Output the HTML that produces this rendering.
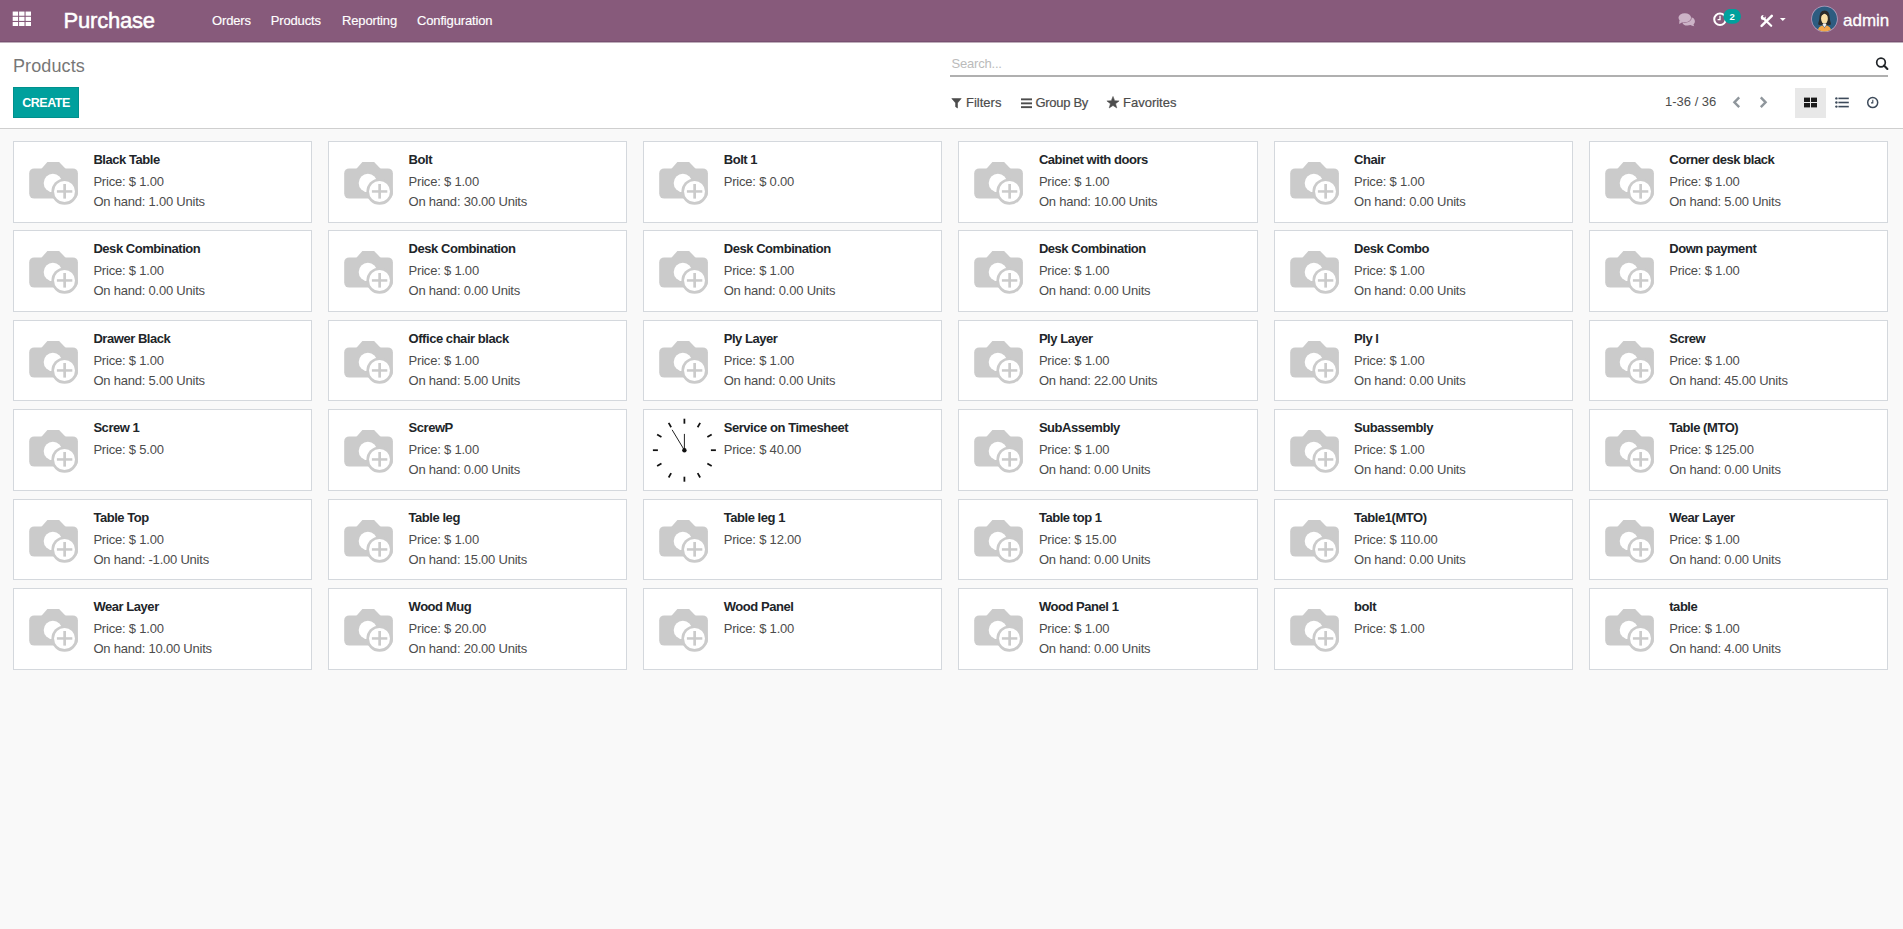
<!DOCTYPE html>
<html><head><meta charset="utf-8"><title>Products - Purchase</title>
<style>
*{box-sizing:border-box}
html,body{margin:0;padding:0;width:1903px;height:929px;overflow:hidden;background:#f9f9f9;font-family:"Liberation Sans",sans-serif;}
.nav{position:absolute;left:0;top:0;width:1903px;height:41px;background:#875A7B;}
.abs{position:absolute;white-space:nowrap;}
.brand{left:63.5px;top:6.5px;font-size:22px;line-height:28px;color:#fff;letter-spacing:-0.2px;-webkit-text-stroke:0.5px #fff;}
.menu{top:11px;font-size:13px;line-height:20px;color:#fff;letter-spacing:-0.15px;-webkit-text-stroke:0.15px #fff;}
.cp{position:absolute;left:0;top:43px;width:1903px;height:86px;background:#fff;border-bottom:1px solid #cfcfcf;}
.bc{left:13px;top:54.2px;letter-spacing:0.1px;font-size:18px;line-height:24px;color:#777;}
.btn{left:13px;top:87px;width:66px;height:31px;background:#00A09D;border:1px solid #00908d;color:#fff;font-weight:bold;font-size:12.5px;letter-spacing:-0.5px;line-height:30.5px;text-align:center;}
.search{left:950px;top:54px;width:938px;height:23px;border-bottom:2px solid #b0b0b0;}
.sph{left:951.5px;top:56px;letter-spacing:-0.2px;font-size:13px;line-height:16px;color:#bbb;}
.fb{top:95.3px;font-size:13px;line-height:16px;color:#4c4c4c;-webkit-text-stroke:0.2px #4c4c4c;}
.pager{left:1665px;top:93.9px;font-size:13px;line-height:16px;color:#4c4c4c;}
.grid{position:absolute;left:13px;top:141px;width:1875px;display:grid;grid-template-columns:repeat(6,1fr);column-gap:16px;row-gap:7.7px;}
.rec{position:relative;height:81.7px;background:#fff;border:1px solid #d4d8dd;}
.rec .cam{position:absolute;left:11px;top:16px;}
.rec .clk{position:absolute;left:-1px;top:-1px;}
.t{position:absolute;left:79.4px;font-size:13px;line-height:20px;white-space:nowrap;}
.n{top:8px;font-weight:bold;color:#212529;letter-spacing:-0.45px;}
.p{top:30px;color:#4c4c4c;letter-spacing:-0.2px;}
.o{top:50px;color:#4c4c4c;letter-spacing:-0.22px;}
</style></head><body>
<div class="nav"></div>
<div class="abs" style="left:0;top:41px;width:1903px;height:1px;background:#775070"></div>
<div class="abs" style="left:0;top:42px;width:1903px;height:1px;background:#bfaebb"></div>
<svg class="abs" style="left:12px;top:11px" width="20" height="16" viewBox="0 0 20 16">
<g fill="#fff">
<rect x="0.7" y="0.55" width="5.4" height="4.2"/><rect x="7.1" y="0.55" width="5.4" height="4.2"/><rect x="13.6" y="0.55" width="5.4" height="4.2"/>
<rect x="0.7" y="5.8" width="5.4" height="4.1"/><rect x="7.1" y="5.8" width="5.4" height="4.1"/><rect x="13.6" y="5.8" width="5.4" height="4.1"/>
<rect x="0.7" y="11" width="5.4" height="4"/><rect x="7.1" y="11" width="5.4" height="4"/><rect x="13.6" y="11" width="5.4" height="4"/>
</g></svg>
<div class="abs brand">Purchase</div>
<div class="abs menu" style="left:212px">Orders</div>
<div class="abs menu" style="left:270.7px">Products</div>
<div class="abs menu" style="left:342px">Reporting</div>
<div class="abs menu" style="left:417px">Configuration</div>
<!-- chat icon -->
<svg class="abs" style="left:1676px;top:11px" width="22" height="18" viewBox="0 0 22 18">
<g fill="#ccb3c7">
<path d="M9.5 5.6 C14.6 5.2 18.9 6.8 18.9 10.3 C18.9 12 18 13.1 17.4 13.7 L18.3 15.3 C16.7 15.1 15.5 14.7 14.4 14.1 C13.5 14.4 12.5 14.6 11.5 14.6 C8.5 14.6 6.6 13.2 6.2 11.2 Z"/>
</g>
<ellipse cx="8.8" cy="6.7" rx="6.9" ry="5" fill="#875A7B"/>
<g fill="#ccb3c7">
<ellipse cx="8.8" cy="6.7" rx="6.3" ry="4.5"/>
<path d="M3.4 9.2 L3.2 12.9 L7.2 10.8 Z"/>
</g></svg>
<!-- activity clock -->
<svg class="abs" style="left:1710px;top:9px" width="34" height="20" viewBox="0 0 34 20">
<circle cx="10" cy="10.3" r="5.8" fill="none" stroke="#fff" stroke-width="2"/>
<path d="M10 6.8 V10.6 H7.6" fill="none" stroke="#fff" stroke-width="1.3"/>
<rect x="13.4" y="-0.2" width="17.6" height="15" rx="7.5" fill="#00A09D"/>
<text x="22.2" y="11" font-family="Liberation Sans" font-size="9.5" font-weight="bold" fill="#fff" text-anchor="middle">2</text>
</svg>
<!-- tools -->
<svg class="abs" style="left:1759px;top:13px" width="30" height="16" viewBox="0 0 30 16">
<g stroke="#fff" stroke-linecap="round" fill="none">
<path d="M5.4 6.2 L12.2 12.8" stroke-width="2.2"/>
<path d="M2.6 12.8 L12.8 2.9" stroke-width="2.5"/>
</g>
<circle cx="4.3" cy="4.4" r="2.5" fill="#fff"/>
<circle cx="5.3" cy="3.2" r="1.2" fill="#875A7B"/>
<path d="M20.9 5 L26.7 5 L23.8 8 Z" fill="#fff"/>
</svg>
<!-- avatar -->
<svg class="abs" style="left:1810px;top:5px" width="29" height="29" viewBox="0 0 29 29">
<defs><clipPath id="av"><circle cx="14.5" cy="13.9" r="12.5"/></clipPath></defs>
<circle cx="14.5" cy="13.9" r="13.2" fill="#bba6c4"/>
<circle cx="14.5" cy="13.9" r="12.5" fill="#2d5c80"/>
<g clip-path="url(#av)">
<path d="M8.6 19.8 C7.6 18.6 9.2 16.6 9.4 13 C9.6 8.2 11 5.4 14.6 5.4 C18.2 5.4 19.6 8.4 19.8 13 C20 16.6 21.6 18.6 20.6 19.8 C18 20.6 11 20.6 8.6 19.8 Z" fill="#2b2b2b"/>
<ellipse cx="14.45" cy="13.6" rx="3.4" ry="5" fill="#f9dfa6"/>
<path d="M10.8 10.4 C11.2 7.2 13.6 6.6 15.4 6.8 C17.4 7.2 18.4 8.6 18.4 10.6 C16.8 9.6 15.4 9.2 14.4 8.4 C13.4 9.4 12 10 10.8 10.4 Z" fill="#2b2b2b"/>
<path d="M7.2 29 C7.4 23 9.8 21.4 12.4 20.6 L14.5 22.4 L16.6 20.6 C19.2 21.4 21.6 23 21.8 29 Z" fill="#f4a64a"/>
<path d="M12.6 19.8 L14.5 22.2 L16.4 19.8 L16 18.6 H13 Z" fill="#f1f1f1"/>
<path d="M14 22 L14.5 23.6 L15 22 Z" fill="#7d6f8a"/>
</g>
</svg>
<div class="abs" style="left:1843px;top:8.7px;font-size:17px;line-height:24px;color:#fff;-webkit-text-stroke:0.3px #fff">admin</div>

<div class="cp"></div>
<div class="abs bc">Products</div>
<div class="abs btn">CREATE</div>
<div class="abs search"></div>
<div class="abs sph">Search...</div>
<svg class="abs" style="left:1872px;top:54px" width="20" height="20" viewBox="0 0 20 20">
<circle cx="9" cy="8.5" r="4.3" fill="none" stroke="#212529" stroke-width="1.7"/>
<path d="M12 11.6 L15.4 15" stroke="#212529" stroke-width="2.1" stroke-linecap="round"/>
</svg>
<!-- funnel -->
<svg class="abs" style="left:950px;top:96px" width="14" height="14" viewBox="0 0 14 14">
<path d="M1.8 2.6 H11.2 L7.5 6.9 V12 L5.6 10.8 V6.9 Z" fill="#4c4c4c" stroke="#4c4c4c" stroke-width="0.6" stroke-linejoin="round"/>
</svg>
<div class="abs fb" style="left:966px">Filters</div>
<!-- bars -->
<svg class="abs" style="left:1020px;top:96px" width="14" height="14" viewBox="0 0 14 14">
<g fill="#4c4c4c"><rect x="1" y="2.4" width="11" height="1.9"/><rect x="1" y="6.4" width="11" height="1.9"/><rect x="1" y="10.2" width="11" height="1.9"/></g>
</svg>
<div class="abs fb" style="left:1035.5px;letter-spacing:-0.3px">Group By</div>
<!-- star -->
<svg class="abs" style="left:1105px;top:95px" width="16" height="15" viewBox="0 0 16 15">
<path d="M8 1.4 L9.7 5.7 L14.1 5.9 L10.6 8.7 L11.8 13 L8 10.5 L4.2 13 L5.4 8.7 L1.9 5.9 L6.3 5.7 Z" fill="#4c4c4c" stroke="#4c4c4c" stroke-width="0.5" stroke-linejoin="round"/>
</svg>
<div class="abs fb" style="left:1123px">Favorites</div>
<div class="abs pager">1-36 / 36</div>
<svg class="abs" style="left:1729px;top:94px" width="44" height="16" viewBox="0 0 44 16">
<g fill="none" stroke="#8f969c" stroke-width="2.4" stroke-linejoin="miter">
<path d="M10.2 3.4 L5.4 8.3 L10.2 13.2"/>
<path d="M31.8 3.4 L36.6 8.3 L31.8 13.2"/>
</g></svg>
<div class="abs" style="left:1795px;top:88px;width:31px;height:30px;background:#e8e8e8"></div>
<svg class="abs" style="left:1802px;top:95px" width="18" height="15" viewBox="0 0 18 15">
<g fill="#1a1a1a"><rect x="2" y="2.6" width="6" height="4.4"/><rect x="9" y="2.6" width="6" height="4.4"/><rect x="2" y="8" width="6" height="4.4"/><rect x="9" y="8" width="6" height="4.4"/></g>
</svg>
<svg class="abs" style="left:1833px;top:95px" width="18" height="15" viewBox="0 0 18 15">
<g fill="#3d4a5a"><circle cx="3.4" cy="3.4" r="1.2"/><circle cx="3.4" cy="7.5" r="1.2"/><circle cx="3.4" cy="11.6" r="1.2"/>
<rect x="5.4" y="2.6" width="10.4" height="1.6"/><rect x="5.4" y="6.7" width="10.4" height="1.6"/><rect x="5.4" y="10.8" width="10.4" height="1.6"/></g>
</svg>
<svg class="abs" style="left:1864px;top:94px" width="18" height="18" viewBox="0 0 18 18">
<circle cx="8.7" cy="8.6" r="5" fill="none" stroke="#3d4a5a" stroke-width="1.5"/>
<path d="M8.8 5.8 V8.9 H7" fill="none" stroke="#3d4a5a" stroke-width="1.1"/>
</svg>

<div class="grid">
<div class="rec"><svg class="cam" width="60" height="52" viewBox="0 0 60 52"><path d="M15.8 11.4 L22.4 3.9 L34.1 3.9 L41.3 11.4 Z" fill="#cbcbcb"/><rect x="4.2" y="10.4" width="48.7" height="30.2" rx="5" fill="#cbcbcb"/><circle cx="27.9" cy="24.9" r="9.2" fill="#fff"/><circle cx="39.6" cy="33.6" r="13.2" fill="#cbcbcb"/><circle cx="39.5" cy="33.5" r="10.5" fill="#fff"/><rect x="31.9" y="32.2" width="15.4" height="2.5" fill="#cbcbcb"/><rect x="38.3" y="26" width="2.7" height="14.6" fill="#cbcbcb"/></svg><div class="t n">Black Table</div><div class="t p">Price: $ 1.00</div><div class="t o">On hand: 1.00 Units</div></div>
<div class="rec"><svg class="cam" width="60" height="52" viewBox="0 0 60 52"><path d="M15.8 11.4 L22.4 3.9 L34.1 3.9 L41.3 11.4 Z" fill="#cbcbcb"/><rect x="4.2" y="10.4" width="48.7" height="30.2" rx="5" fill="#cbcbcb"/><circle cx="27.9" cy="24.9" r="9.2" fill="#fff"/><circle cx="39.6" cy="33.6" r="13.2" fill="#cbcbcb"/><circle cx="39.5" cy="33.5" r="10.5" fill="#fff"/><rect x="31.9" y="32.2" width="15.4" height="2.5" fill="#cbcbcb"/><rect x="38.3" y="26" width="2.7" height="14.6" fill="#cbcbcb"/></svg><div class="t n">Bolt</div><div class="t p">Price: $ 1.00</div><div class="t o">On hand: 30.00 Units</div></div>
<div class="rec"><svg class="cam" width="60" height="52" viewBox="0 0 60 52"><path d="M15.8 11.4 L22.4 3.9 L34.1 3.9 L41.3 11.4 Z" fill="#cbcbcb"/><rect x="4.2" y="10.4" width="48.7" height="30.2" rx="5" fill="#cbcbcb"/><circle cx="27.9" cy="24.9" r="9.2" fill="#fff"/><circle cx="39.6" cy="33.6" r="13.2" fill="#cbcbcb"/><circle cx="39.5" cy="33.5" r="10.5" fill="#fff"/><rect x="31.9" y="32.2" width="15.4" height="2.5" fill="#cbcbcb"/><rect x="38.3" y="26" width="2.7" height="14.6" fill="#cbcbcb"/></svg><div class="t n">Bolt 1</div><div class="t p">Price: $ 0.00</div></div>
<div class="rec"><svg class="cam" width="60" height="52" viewBox="0 0 60 52"><path d="M15.8 11.4 L22.4 3.9 L34.1 3.9 L41.3 11.4 Z" fill="#cbcbcb"/><rect x="4.2" y="10.4" width="48.7" height="30.2" rx="5" fill="#cbcbcb"/><circle cx="27.9" cy="24.9" r="9.2" fill="#fff"/><circle cx="39.6" cy="33.6" r="13.2" fill="#cbcbcb"/><circle cx="39.5" cy="33.5" r="10.5" fill="#fff"/><rect x="31.9" y="32.2" width="15.4" height="2.5" fill="#cbcbcb"/><rect x="38.3" y="26" width="2.7" height="14.6" fill="#cbcbcb"/></svg><div class="t n">Cabinet with doors</div><div class="t p">Price: $ 1.00</div><div class="t o">On hand: 10.00 Units</div></div>
<div class="rec"><svg class="cam" width="60" height="52" viewBox="0 0 60 52"><path d="M15.8 11.4 L22.4 3.9 L34.1 3.9 L41.3 11.4 Z" fill="#cbcbcb"/><rect x="4.2" y="10.4" width="48.7" height="30.2" rx="5" fill="#cbcbcb"/><circle cx="27.9" cy="24.9" r="9.2" fill="#fff"/><circle cx="39.6" cy="33.6" r="13.2" fill="#cbcbcb"/><circle cx="39.5" cy="33.5" r="10.5" fill="#fff"/><rect x="31.9" y="32.2" width="15.4" height="2.5" fill="#cbcbcb"/><rect x="38.3" y="26" width="2.7" height="14.6" fill="#cbcbcb"/></svg><div class="t n">Chair</div><div class="t p">Price: $ 1.00</div><div class="t o">On hand: 0.00 Units</div></div>
<div class="rec"><svg class="cam" width="60" height="52" viewBox="0 0 60 52"><path d="M15.8 11.4 L22.4 3.9 L34.1 3.9 L41.3 11.4 Z" fill="#cbcbcb"/><rect x="4.2" y="10.4" width="48.7" height="30.2" rx="5" fill="#cbcbcb"/><circle cx="27.9" cy="24.9" r="9.2" fill="#fff"/><circle cx="39.6" cy="33.6" r="13.2" fill="#cbcbcb"/><circle cx="39.5" cy="33.5" r="10.5" fill="#fff"/><rect x="31.9" y="32.2" width="15.4" height="2.5" fill="#cbcbcb"/><rect x="38.3" y="26" width="2.7" height="14.6" fill="#cbcbcb"/></svg><div class="t n">Corner desk black</div><div class="t p">Price: $ 1.00</div><div class="t o">On hand: 5.00 Units</div></div>
<div class="rec"><svg class="cam" width="60" height="52" viewBox="0 0 60 52"><path d="M15.8 11.4 L22.4 3.9 L34.1 3.9 L41.3 11.4 Z" fill="#cbcbcb"/><rect x="4.2" y="10.4" width="48.7" height="30.2" rx="5" fill="#cbcbcb"/><circle cx="27.9" cy="24.9" r="9.2" fill="#fff"/><circle cx="39.6" cy="33.6" r="13.2" fill="#cbcbcb"/><circle cx="39.5" cy="33.5" r="10.5" fill="#fff"/><rect x="31.9" y="32.2" width="15.4" height="2.5" fill="#cbcbcb"/><rect x="38.3" y="26" width="2.7" height="14.6" fill="#cbcbcb"/></svg><div class="t n">Desk Combination</div><div class="t p">Price: $ 1.00</div><div class="t o">On hand: 0.00 Units</div></div>
<div class="rec"><svg class="cam" width="60" height="52" viewBox="0 0 60 52"><path d="M15.8 11.4 L22.4 3.9 L34.1 3.9 L41.3 11.4 Z" fill="#cbcbcb"/><rect x="4.2" y="10.4" width="48.7" height="30.2" rx="5" fill="#cbcbcb"/><circle cx="27.9" cy="24.9" r="9.2" fill="#fff"/><circle cx="39.6" cy="33.6" r="13.2" fill="#cbcbcb"/><circle cx="39.5" cy="33.5" r="10.5" fill="#fff"/><rect x="31.9" y="32.2" width="15.4" height="2.5" fill="#cbcbcb"/><rect x="38.3" y="26" width="2.7" height="14.6" fill="#cbcbcb"/></svg><div class="t n">Desk Combination</div><div class="t p">Price: $ 1.00</div><div class="t o">On hand: 0.00 Units</div></div>
<div class="rec"><svg class="cam" width="60" height="52" viewBox="0 0 60 52"><path d="M15.8 11.4 L22.4 3.9 L34.1 3.9 L41.3 11.4 Z" fill="#cbcbcb"/><rect x="4.2" y="10.4" width="48.7" height="30.2" rx="5" fill="#cbcbcb"/><circle cx="27.9" cy="24.9" r="9.2" fill="#fff"/><circle cx="39.6" cy="33.6" r="13.2" fill="#cbcbcb"/><circle cx="39.5" cy="33.5" r="10.5" fill="#fff"/><rect x="31.9" y="32.2" width="15.4" height="2.5" fill="#cbcbcb"/><rect x="38.3" y="26" width="2.7" height="14.6" fill="#cbcbcb"/></svg><div class="t n">Desk Combination</div><div class="t p">Price: $ 1.00</div><div class="t o">On hand: 0.00 Units</div></div>
<div class="rec"><svg class="cam" width="60" height="52" viewBox="0 0 60 52"><path d="M15.8 11.4 L22.4 3.9 L34.1 3.9 L41.3 11.4 Z" fill="#cbcbcb"/><rect x="4.2" y="10.4" width="48.7" height="30.2" rx="5" fill="#cbcbcb"/><circle cx="27.9" cy="24.9" r="9.2" fill="#fff"/><circle cx="39.6" cy="33.6" r="13.2" fill="#cbcbcb"/><circle cx="39.5" cy="33.5" r="10.5" fill="#fff"/><rect x="31.9" y="32.2" width="15.4" height="2.5" fill="#cbcbcb"/><rect x="38.3" y="26" width="2.7" height="14.6" fill="#cbcbcb"/></svg><div class="t n">Desk Combination</div><div class="t p">Price: $ 1.00</div><div class="t o">On hand: 0.00 Units</div></div>
<div class="rec"><svg class="cam" width="60" height="52" viewBox="0 0 60 52"><path d="M15.8 11.4 L22.4 3.9 L34.1 3.9 L41.3 11.4 Z" fill="#cbcbcb"/><rect x="4.2" y="10.4" width="48.7" height="30.2" rx="5" fill="#cbcbcb"/><circle cx="27.9" cy="24.9" r="9.2" fill="#fff"/><circle cx="39.6" cy="33.6" r="13.2" fill="#cbcbcb"/><circle cx="39.5" cy="33.5" r="10.5" fill="#fff"/><rect x="31.9" y="32.2" width="15.4" height="2.5" fill="#cbcbcb"/><rect x="38.3" y="26" width="2.7" height="14.6" fill="#cbcbcb"/></svg><div class="t n">Desk Combo</div><div class="t p">Price: $ 1.00</div><div class="t o">On hand: 0.00 Units</div></div>
<div class="rec"><svg class="cam" width="60" height="52" viewBox="0 0 60 52"><path d="M15.8 11.4 L22.4 3.9 L34.1 3.9 L41.3 11.4 Z" fill="#cbcbcb"/><rect x="4.2" y="10.4" width="48.7" height="30.2" rx="5" fill="#cbcbcb"/><circle cx="27.9" cy="24.9" r="9.2" fill="#fff"/><circle cx="39.6" cy="33.6" r="13.2" fill="#cbcbcb"/><circle cx="39.5" cy="33.5" r="10.5" fill="#fff"/><rect x="31.9" y="32.2" width="15.4" height="2.5" fill="#cbcbcb"/><rect x="38.3" y="26" width="2.7" height="14.6" fill="#cbcbcb"/></svg><div class="t n">Down payment</div><div class="t p">Price: $ 1.00</div></div>
<div class="rec"><svg class="cam" width="60" height="52" viewBox="0 0 60 52"><path d="M15.8 11.4 L22.4 3.9 L34.1 3.9 L41.3 11.4 Z" fill="#cbcbcb"/><rect x="4.2" y="10.4" width="48.7" height="30.2" rx="5" fill="#cbcbcb"/><circle cx="27.9" cy="24.9" r="9.2" fill="#fff"/><circle cx="39.6" cy="33.6" r="13.2" fill="#cbcbcb"/><circle cx="39.5" cy="33.5" r="10.5" fill="#fff"/><rect x="31.9" y="32.2" width="15.4" height="2.5" fill="#cbcbcb"/><rect x="38.3" y="26" width="2.7" height="14.6" fill="#cbcbcb"/></svg><div class="t n">Drawer Black</div><div class="t p">Price: $ 1.00</div><div class="t o">On hand: 5.00 Units</div></div>
<div class="rec"><svg class="cam" width="60" height="52" viewBox="0 0 60 52"><path d="M15.8 11.4 L22.4 3.9 L34.1 3.9 L41.3 11.4 Z" fill="#cbcbcb"/><rect x="4.2" y="10.4" width="48.7" height="30.2" rx="5" fill="#cbcbcb"/><circle cx="27.9" cy="24.9" r="9.2" fill="#fff"/><circle cx="39.6" cy="33.6" r="13.2" fill="#cbcbcb"/><circle cx="39.5" cy="33.5" r="10.5" fill="#fff"/><rect x="31.9" y="32.2" width="15.4" height="2.5" fill="#cbcbcb"/><rect x="38.3" y="26" width="2.7" height="14.6" fill="#cbcbcb"/></svg><div class="t n">Office chair black</div><div class="t p">Price: $ 1.00</div><div class="t o">On hand: 5.00 Units</div></div>
<div class="rec"><svg class="cam" width="60" height="52" viewBox="0 0 60 52"><path d="M15.8 11.4 L22.4 3.9 L34.1 3.9 L41.3 11.4 Z" fill="#cbcbcb"/><rect x="4.2" y="10.4" width="48.7" height="30.2" rx="5" fill="#cbcbcb"/><circle cx="27.9" cy="24.9" r="9.2" fill="#fff"/><circle cx="39.6" cy="33.6" r="13.2" fill="#cbcbcb"/><circle cx="39.5" cy="33.5" r="10.5" fill="#fff"/><rect x="31.9" y="32.2" width="15.4" height="2.5" fill="#cbcbcb"/><rect x="38.3" y="26" width="2.7" height="14.6" fill="#cbcbcb"/></svg><div class="t n">Ply Layer</div><div class="t p">Price: $ 1.00</div><div class="t o">On hand: 0.00 Units</div></div>
<div class="rec"><svg class="cam" width="60" height="52" viewBox="0 0 60 52"><path d="M15.8 11.4 L22.4 3.9 L34.1 3.9 L41.3 11.4 Z" fill="#cbcbcb"/><rect x="4.2" y="10.4" width="48.7" height="30.2" rx="5" fill="#cbcbcb"/><circle cx="27.9" cy="24.9" r="9.2" fill="#fff"/><circle cx="39.6" cy="33.6" r="13.2" fill="#cbcbcb"/><circle cx="39.5" cy="33.5" r="10.5" fill="#fff"/><rect x="31.9" y="32.2" width="15.4" height="2.5" fill="#cbcbcb"/><rect x="38.3" y="26" width="2.7" height="14.6" fill="#cbcbcb"/></svg><div class="t n">Ply Layer</div><div class="t p">Price: $ 1.00</div><div class="t o">On hand: 22.00 Units</div></div>
<div class="rec"><svg class="cam" width="60" height="52" viewBox="0 0 60 52"><path d="M15.8 11.4 L22.4 3.9 L34.1 3.9 L41.3 11.4 Z" fill="#cbcbcb"/><rect x="4.2" y="10.4" width="48.7" height="30.2" rx="5" fill="#cbcbcb"/><circle cx="27.9" cy="24.9" r="9.2" fill="#fff"/><circle cx="39.6" cy="33.6" r="13.2" fill="#cbcbcb"/><circle cx="39.5" cy="33.5" r="10.5" fill="#fff"/><rect x="31.9" y="32.2" width="15.4" height="2.5" fill="#cbcbcb"/><rect x="38.3" y="26" width="2.7" height="14.6" fill="#cbcbcb"/></svg><div class="t n">Ply l</div><div class="t p">Price: $ 1.00</div><div class="t o">On hand: 0.00 Units</div></div>
<div class="rec"><svg class="cam" width="60" height="52" viewBox="0 0 60 52"><path d="M15.8 11.4 L22.4 3.9 L34.1 3.9 L41.3 11.4 Z" fill="#cbcbcb"/><rect x="4.2" y="10.4" width="48.7" height="30.2" rx="5" fill="#cbcbcb"/><circle cx="27.9" cy="24.9" r="9.2" fill="#fff"/><circle cx="39.6" cy="33.6" r="13.2" fill="#cbcbcb"/><circle cx="39.5" cy="33.5" r="10.5" fill="#fff"/><rect x="31.9" y="32.2" width="15.4" height="2.5" fill="#cbcbcb"/><rect x="38.3" y="26" width="2.7" height="14.6" fill="#cbcbcb"/></svg><div class="t n">Screw</div><div class="t p">Price: $ 1.00</div><div class="t o">On hand: 45.00 Units</div></div>
<div class="rec"><svg class="cam" width="60" height="52" viewBox="0 0 60 52"><path d="M15.8 11.4 L22.4 3.9 L34.1 3.9 L41.3 11.4 Z" fill="#cbcbcb"/><rect x="4.2" y="10.4" width="48.7" height="30.2" rx="5" fill="#cbcbcb"/><circle cx="27.9" cy="24.9" r="9.2" fill="#fff"/><circle cx="39.6" cy="33.6" r="13.2" fill="#cbcbcb"/><circle cx="39.5" cy="33.5" r="10.5" fill="#fff"/><rect x="31.9" y="32.2" width="15.4" height="2.5" fill="#cbcbcb"/><rect x="38.3" y="26" width="2.7" height="14.6" fill="#cbcbcb"/></svg><div class="t n">Screw 1</div><div class="t p">Price: $ 5.00</div></div>
<div class="rec"><svg class="cam" width="60" height="52" viewBox="0 0 60 52"><path d="M15.8 11.4 L22.4 3.9 L34.1 3.9 L41.3 11.4 Z" fill="#cbcbcb"/><rect x="4.2" y="10.4" width="48.7" height="30.2" rx="5" fill="#cbcbcb"/><circle cx="27.9" cy="24.9" r="9.2" fill="#fff"/><circle cx="39.6" cy="33.6" r="13.2" fill="#cbcbcb"/><circle cx="39.5" cy="33.5" r="10.5" fill="#fff"/><rect x="31.9" y="32.2" width="15.4" height="2.5" fill="#cbcbcb"/><rect x="38.3" y="26" width="2.7" height="14.6" fill="#cbcbcb"/></svg><div class="t n">ScrewP</div><div class="t p">Price: $ 1.00</div><div class="t o">On hand: 0.00 Units</div></div>
<div class="rec"><svg class="clk" width="80" height="80" viewBox="0 0 80 80"><line x1="41.40" y1="14.70" x2="41.40" y2="9.70" stroke="#111" stroke-width="1.75"/><line x1="54.65" y1="18.25" x2="57.15" y2="13.92" stroke="#111" stroke-width="1.75"/><line x1="64.35" y1="27.95" x2="68.68" y2="25.45" stroke="#111" stroke-width="1.75"/><line x1="67.90" y1="41.20" x2="72.90" y2="41.20" stroke="#111" stroke-width="1.75"/><line x1="64.35" y1="54.45" x2="68.68" y2="56.95" stroke="#111" stroke-width="1.75"/><line x1="54.65" y1="64.15" x2="57.15" y2="68.48" stroke="#111" stroke-width="1.75"/><line x1="41.40" y1="67.70" x2="41.40" y2="72.70" stroke="#111" stroke-width="1.75"/><line x1="28.15" y1="64.15" x2="25.65" y2="68.48" stroke="#111" stroke-width="1.75"/><line x1="18.45" y1="54.45" x2="14.12" y2="56.95" stroke="#111" stroke-width="1.75"/><line x1="14.90" y1="41.20" x2="9.90" y2="41.20" stroke="#111" stroke-width="1.75"/><line x1="18.45" y1="27.95" x2="14.12" y2="25.45" stroke="#111" stroke-width="1.75"/><line x1="28.15" y1="18.25" x2="25.65" y2="13.92" stroke="#111" stroke-width="1.75"/><line x1="41.40" y1="41.20" x2="41.40" y2="24.90" stroke="#222" stroke-width="1"/><line x1="41.40" y1="41.20" x2="29.10" y2="20.80" stroke="#222" stroke-width="1"/><circle cx="41.40" cy="41.20" r="2.2" fill="#111"/></svg><div class="t n">Service on Timesheet</div><div class="t p">Price: $ 40.00</div></div>
<div class="rec"><svg class="cam" width="60" height="52" viewBox="0 0 60 52"><path d="M15.8 11.4 L22.4 3.9 L34.1 3.9 L41.3 11.4 Z" fill="#cbcbcb"/><rect x="4.2" y="10.4" width="48.7" height="30.2" rx="5" fill="#cbcbcb"/><circle cx="27.9" cy="24.9" r="9.2" fill="#fff"/><circle cx="39.6" cy="33.6" r="13.2" fill="#cbcbcb"/><circle cx="39.5" cy="33.5" r="10.5" fill="#fff"/><rect x="31.9" y="32.2" width="15.4" height="2.5" fill="#cbcbcb"/><rect x="38.3" y="26" width="2.7" height="14.6" fill="#cbcbcb"/></svg><div class="t n">SubAssembly</div><div class="t p">Price: $ 1.00</div><div class="t o">On hand: 0.00 Units</div></div>
<div class="rec"><svg class="cam" width="60" height="52" viewBox="0 0 60 52"><path d="M15.8 11.4 L22.4 3.9 L34.1 3.9 L41.3 11.4 Z" fill="#cbcbcb"/><rect x="4.2" y="10.4" width="48.7" height="30.2" rx="5" fill="#cbcbcb"/><circle cx="27.9" cy="24.9" r="9.2" fill="#fff"/><circle cx="39.6" cy="33.6" r="13.2" fill="#cbcbcb"/><circle cx="39.5" cy="33.5" r="10.5" fill="#fff"/><rect x="31.9" y="32.2" width="15.4" height="2.5" fill="#cbcbcb"/><rect x="38.3" y="26" width="2.7" height="14.6" fill="#cbcbcb"/></svg><div class="t n">Subassembly</div><div class="t p">Price: $ 1.00</div><div class="t o">On hand: 0.00 Units</div></div>
<div class="rec"><svg class="cam" width="60" height="52" viewBox="0 0 60 52"><path d="M15.8 11.4 L22.4 3.9 L34.1 3.9 L41.3 11.4 Z" fill="#cbcbcb"/><rect x="4.2" y="10.4" width="48.7" height="30.2" rx="5" fill="#cbcbcb"/><circle cx="27.9" cy="24.9" r="9.2" fill="#fff"/><circle cx="39.6" cy="33.6" r="13.2" fill="#cbcbcb"/><circle cx="39.5" cy="33.5" r="10.5" fill="#fff"/><rect x="31.9" y="32.2" width="15.4" height="2.5" fill="#cbcbcb"/><rect x="38.3" y="26" width="2.7" height="14.6" fill="#cbcbcb"/></svg><div class="t n">Table (MTO)</div><div class="t p">Price: $ 125.00</div><div class="t o">On hand: 0.00 Units</div></div>
<div class="rec"><svg class="cam" width="60" height="52" viewBox="0 0 60 52"><path d="M15.8 11.4 L22.4 3.9 L34.1 3.9 L41.3 11.4 Z" fill="#cbcbcb"/><rect x="4.2" y="10.4" width="48.7" height="30.2" rx="5" fill="#cbcbcb"/><circle cx="27.9" cy="24.9" r="9.2" fill="#fff"/><circle cx="39.6" cy="33.6" r="13.2" fill="#cbcbcb"/><circle cx="39.5" cy="33.5" r="10.5" fill="#fff"/><rect x="31.9" y="32.2" width="15.4" height="2.5" fill="#cbcbcb"/><rect x="38.3" y="26" width="2.7" height="14.6" fill="#cbcbcb"/></svg><div class="t n">Table Top</div><div class="t p">Price: $ 1.00</div><div class="t o">On hand: -1.00 Units</div></div>
<div class="rec"><svg class="cam" width="60" height="52" viewBox="0 0 60 52"><path d="M15.8 11.4 L22.4 3.9 L34.1 3.9 L41.3 11.4 Z" fill="#cbcbcb"/><rect x="4.2" y="10.4" width="48.7" height="30.2" rx="5" fill="#cbcbcb"/><circle cx="27.9" cy="24.9" r="9.2" fill="#fff"/><circle cx="39.6" cy="33.6" r="13.2" fill="#cbcbcb"/><circle cx="39.5" cy="33.5" r="10.5" fill="#fff"/><rect x="31.9" y="32.2" width="15.4" height="2.5" fill="#cbcbcb"/><rect x="38.3" y="26" width="2.7" height="14.6" fill="#cbcbcb"/></svg><div class="t n">Table leg</div><div class="t p">Price: $ 1.00</div><div class="t o">On hand: 15.00 Units</div></div>
<div class="rec"><svg class="cam" width="60" height="52" viewBox="0 0 60 52"><path d="M15.8 11.4 L22.4 3.9 L34.1 3.9 L41.3 11.4 Z" fill="#cbcbcb"/><rect x="4.2" y="10.4" width="48.7" height="30.2" rx="5" fill="#cbcbcb"/><circle cx="27.9" cy="24.9" r="9.2" fill="#fff"/><circle cx="39.6" cy="33.6" r="13.2" fill="#cbcbcb"/><circle cx="39.5" cy="33.5" r="10.5" fill="#fff"/><rect x="31.9" y="32.2" width="15.4" height="2.5" fill="#cbcbcb"/><rect x="38.3" y="26" width="2.7" height="14.6" fill="#cbcbcb"/></svg><div class="t n">Table leg 1</div><div class="t p">Price: $ 12.00</div></div>
<div class="rec"><svg class="cam" width="60" height="52" viewBox="0 0 60 52"><path d="M15.8 11.4 L22.4 3.9 L34.1 3.9 L41.3 11.4 Z" fill="#cbcbcb"/><rect x="4.2" y="10.4" width="48.7" height="30.2" rx="5" fill="#cbcbcb"/><circle cx="27.9" cy="24.9" r="9.2" fill="#fff"/><circle cx="39.6" cy="33.6" r="13.2" fill="#cbcbcb"/><circle cx="39.5" cy="33.5" r="10.5" fill="#fff"/><rect x="31.9" y="32.2" width="15.4" height="2.5" fill="#cbcbcb"/><rect x="38.3" y="26" width="2.7" height="14.6" fill="#cbcbcb"/></svg><div class="t n">Table top 1</div><div class="t p">Price: $ 15.00</div><div class="t o">On hand: 0.00 Units</div></div>
<div class="rec"><svg class="cam" width="60" height="52" viewBox="0 0 60 52"><path d="M15.8 11.4 L22.4 3.9 L34.1 3.9 L41.3 11.4 Z" fill="#cbcbcb"/><rect x="4.2" y="10.4" width="48.7" height="30.2" rx="5" fill="#cbcbcb"/><circle cx="27.9" cy="24.9" r="9.2" fill="#fff"/><circle cx="39.6" cy="33.6" r="13.2" fill="#cbcbcb"/><circle cx="39.5" cy="33.5" r="10.5" fill="#fff"/><rect x="31.9" y="32.2" width="15.4" height="2.5" fill="#cbcbcb"/><rect x="38.3" y="26" width="2.7" height="14.6" fill="#cbcbcb"/></svg><div class="t n">Table1(MTO)</div><div class="t p">Price: $ 110.00</div><div class="t o">On hand: 0.00 Units</div></div>
<div class="rec"><svg class="cam" width="60" height="52" viewBox="0 0 60 52"><path d="M15.8 11.4 L22.4 3.9 L34.1 3.9 L41.3 11.4 Z" fill="#cbcbcb"/><rect x="4.2" y="10.4" width="48.7" height="30.2" rx="5" fill="#cbcbcb"/><circle cx="27.9" cy="24.9" r="9.2" fill="#fff"/><circle cx="39.6" cy="33.6" r="13.2" fill="#cbcbcb"/><circle cx="39.5" cy="33.5" r="10.5" fill="#fff"/><rect x="31.9" y="32.2" width="15.4" height="2.5" fill="#cbcbcb"/><rect x="38.3" y="26" width="2.7" height="14.6" fill="#cbcbcb"/></svg><div class="t n">Wear Layer</div><div class="t p">Price: $ 1.00</div><div class="t o">On hand: 0.00 Units</div></div>
<div class="rec"><svg class="cam" width="60" height="52" viewBox="0 0 60 52"><path d="M15.8 11.4 L22.4 3.9 L34.1 3.9 L41.3 11.4 Z" fill="#cbcbcb"/><rect x="4.2" y="10.4" width="48.7" height="30.2" rx="5" fill="#cbcbcb"/><circle cx="27.9" cy="24.9" r="9.2" fill="#fff"/><circle cx="39.6" cy="33.6" r="13.2" fill="#cbcbcb"/><circle cx="39.5" cy="33.5" r="10.5" fill="#fff"/><rect x="31.9" y="32.2" width="15.4" height="2.5" fill="#cbcbcb"/><rect x="38.3" y="26" width="2.7" height="14.6" fill="#cbcbcb"/></svg><div class="t n">Wear Layer</div><div class="t p">Price: $ 1.00</div><div class="t o">On hand: 10.00 Units</div></div>
<div class="rec"><svg class="cam" width="60" height="52" viewBox="0 0 60 52"><path d="M15.8 11.4 L22.4 3.9 L34.1 3.9 L41.3 11.4 Z" fill="#cbcbcb"/><rect x="4.2" y="10.4" width="48.7" height="30.2" rx="5" fill="#cbcbcb"/><circle cx="27.9" cy="24.9" r="9.2" fill="#fff"/><circle cx="39.6" cy="33.6" r="13.2" fill="#cbcbcb"/><circle cx="39.5" cy="33.5" r="10.5" fill="#fff"/><rect x="31.9" y="32.2" width="15.4" height="2.5" fill="#cbcbcb"/><rect x="38.3" y="26" width="2.7" height="14.6" fill="#cbcbcb"/></svg><div class="t n">Wood Mug</div><div class="t p">Price: $ 20.00</div><div class="t o">On hand: 20.00 Units</div></div>
<div class="rec"><svg class="cam" width="60" height="52" viewBox="0 0 60 52"><path d="M15.8 11.4 L22.4 3.9 L34.1 3.9 L41.3 11.4 Z" fill="#cbcbcb"/><rect x="4.2" y="10.4" width="48.7" height="30.2" rx="5" fill="#cbcbcb"/><circle cx="27.9" cy="24.9" r="9.2" fill="#fff"/><circle cx="39.6" cy="33.6" r="13.2" fill="#cbcbcb"/><circle cx="39.5" cy="33.5" r="10.5" fill="#fff"/><rect x="31.9" y="32.2" width="15.4" height="2.5" fill="#cbcbcb"/><rect x="38.3" y="26" width="2.7" height="14.6" fill="#cbcbcb"/></svg><div class="t n">Wood Panel</div><div class="t p">Price: $ 1.00</div></div>
<div class="rec"><svg class="cam" width="60" height="52" viewBox="0 0 60 52"><path d="M15.8 11.4 L22.4 3.9 L34.1 3.9 L41.3 11.4 Z" fill="#cbcbcb"/><rect x="4.2" y="10.4" width="48.7" height="30.2" rx="5" fill="#cbcbcb"/><circle cx="27.9" cy="24.9" r="9.2" fill="#fff"/><circle cx="39.6" cy="33.6" r="13.2" fill="#cbcbcb"/><circle cx="39.5" cy="33.5" r="10.5" fill="#fff"/><rect x="31.9" y="32.2" width="15.4" height="2.5" fill="#cbcbcb"/><rect x="38.3" y="26" width="2.7" height="14.6" fill="#cbcbcb"/></svg><div class="t n">Wood Panel 1</div><div class="t p">Price: $ 1.00</div><div class="t o">On hand: 0.00 Units</div></div>
<div class="rec"><svg class="cam" width="60" height="52" viewBox="0 0 60 52"><path d="M15.8 11.4 L22.4 3.9 L34.1 3.9 L41.3 11.4 Z" fill="#cbcbcb"/><rect x="4.2" y="10.4" width="48.7" height="30.2" rx="5" fill="#cbcbcb"/><circle cx="27.9" cy="24.9" r="9.2" fill="#fff"/><circle cx="39.6" cy="33.6" r="13.2" fill="#cbcbcb"/><circle cx="39.5" cy="33.5" r="10.5" fill="#fff"/><rect x="31.9" y="32.2" width="15.4" height="2.5" fill="#cbcbcb"/><rect x="38.3" y="26" width="2.7" height="14.6" fill="#cbcbcb"/></svg><div class="t n">bolt</div><div class="t p">Price: $ 1.00</div></div>
<div class="rec"><svg class="cam" width="60" height="52" viewBox="0 0 60 52"><path d="M15.8 11.4 L22.4 3.9 L34.1 3.9 L41.3 11.4 Z" fill="#cbcbcb"/><rect x="4.2" y="10.4" width="48.7" height="30.2" rx="5" fill="#cbcbcb"/><circle cx="27.9" cy="24.9" r="9.2" fill="#fff"/><circle cx="39.6" cy="33.6" r="13.2" fill="#cbcbcb"/><circle cx="39.5" cy="33.5" r="10.5" fill="#fff"/><rect x="31.9" y="32.2" width="15.4" height="2.5" fill="#cbcbcb"/><rect x="38.3" y="26" width="2.7" height="14.6" fill="#cbcbcb"/></svg><div class="t n">table</div><div class="t p">Price: $ 1.00</div><div class="t o">On hand: 4.00 Units</div></div>
</div>
</body></html>
